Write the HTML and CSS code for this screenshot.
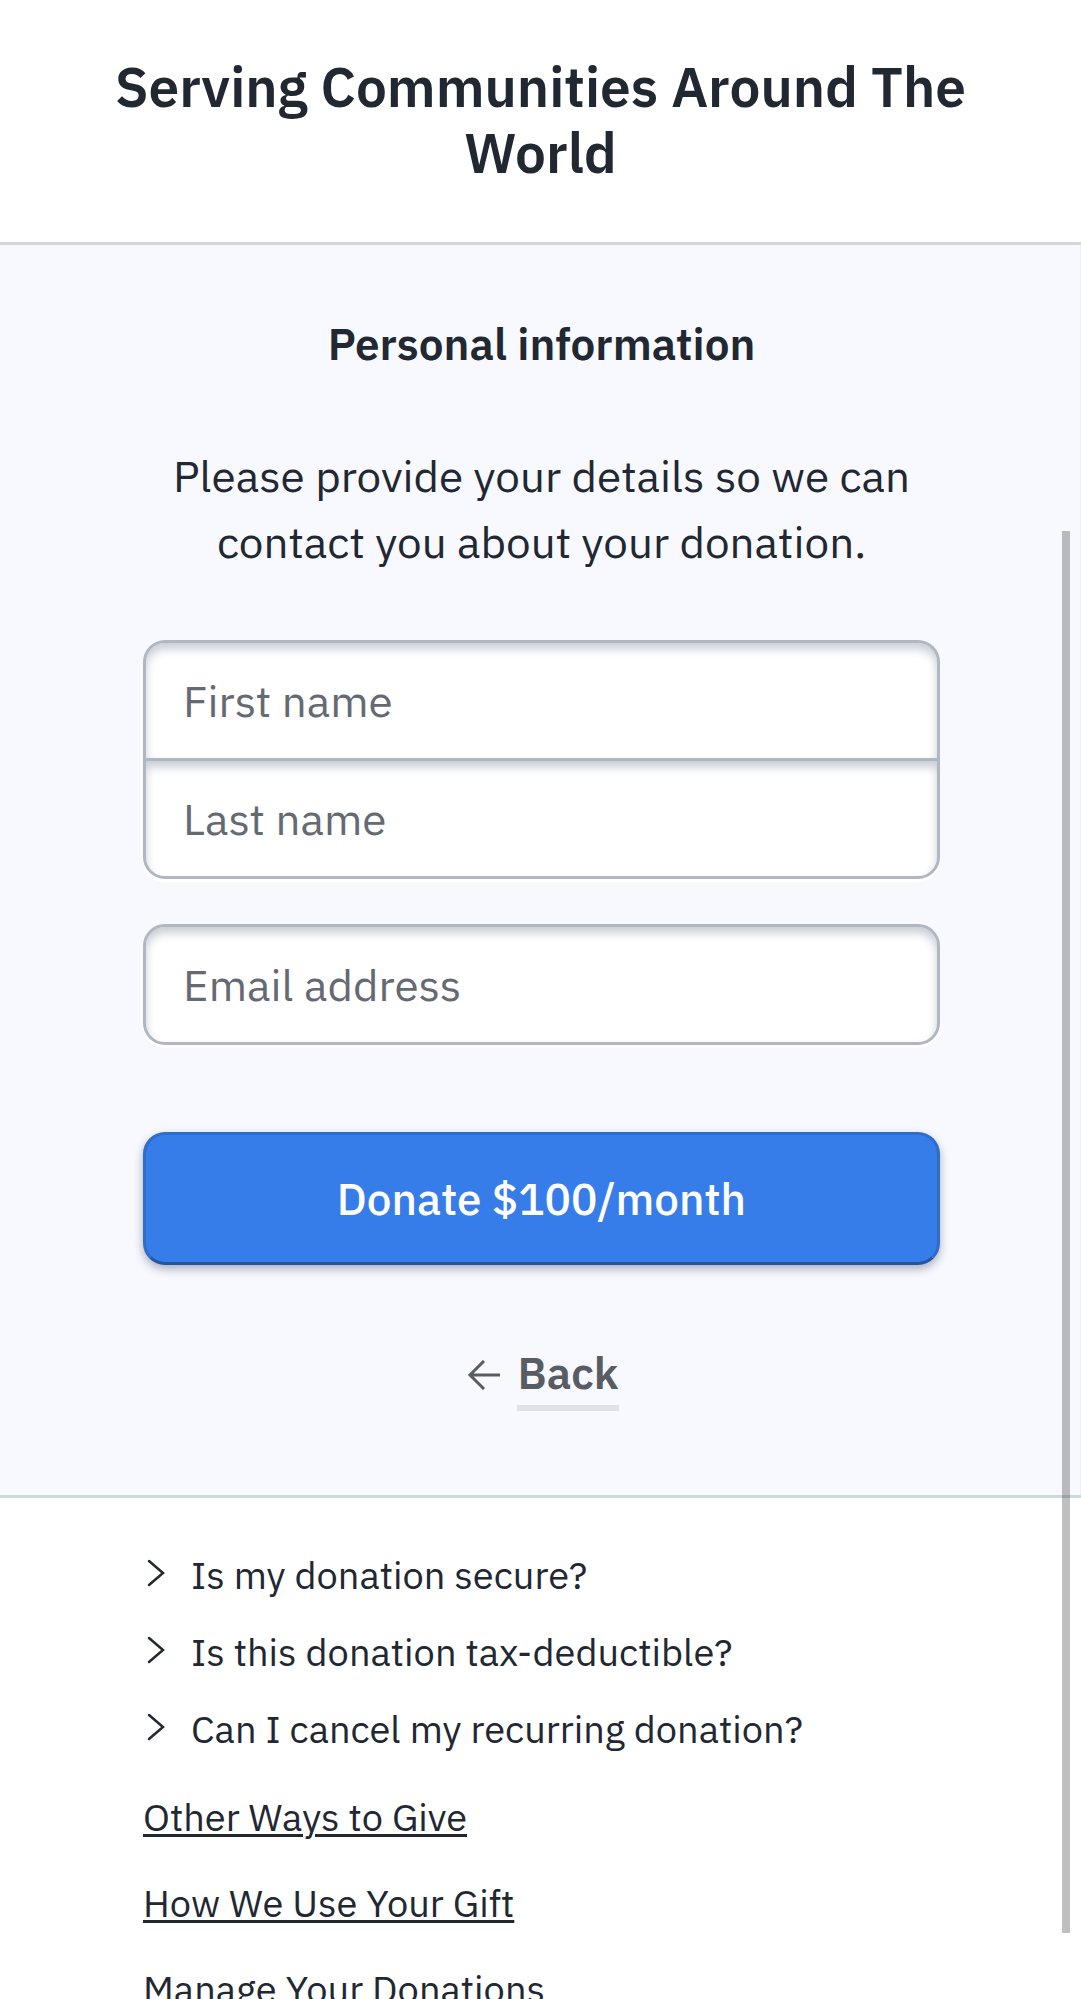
FILE: index.html
```html
<!DOCTYPE html>
<html lang="en">
<head>
<meta charset="utf-8">
<meta name="viewport" content="width=device-width, initial-scale=1">
<title>Serving Communities Around The World</title>
<link rel="stylesheet" href="styles.css">
</head>
<body>
<div class="page">
  <header class="header">
    <h1 class="title">Serving Communities Around The World</h1>
  </header>
  <main class="panel">
    <form class="form">
      <h2 class="heading">Personal information</h2>
      <p class="intro">Please provide your details so we can contact you about your donation.</p>
      <div class="group">
        <input class="field field-top" type="text" placeholder="First name" aria-label="First name">
        <input class="field field-bottom" type="text" placeholder="Last name" aria-label="Last name">
      </div>
      <input class="field" type="email" placeholder="Email address" aria-label="Email address">
      <button class="donate" type="submit">Donate $100/month</button>
      <button class="back" type="button">
        <svg class="arrow" viewBox="-4 0 36 32" aria-hidden="true"><path d="M32 15H2M16 1L2 15L16 29"/></svg>
        <span class="back-label">Back</span>
      </button>
    </form>
  </main>
  <footer class="footer">
    <ul class="faq">
      <li><button class="question" type="button"><svg class="chevron" viewBox="0 0 16 30" aria-hidden="true"><path d="M1 1L15 13L1 25"/></svg>Is my donation secure?</button></li>
      <li><button class="question" type="button"><svg class="chevron" viewBox="0 0 16 30" aria-hidden="true"><path d="M1 1L15 13L1 25"/></svg>Is this donation tax-deductible?</button></li>
      <li><button class="question" type="button"><svg class="chevron" viewBox="0 0 16 30" aria-hidden="true"><path d="M1 1L15 13L1 25"/></svg>Can I cancel my recurring donation?</button></li>
    </ul>
    <nav class="links">
      <a href="#ways">Other Ways to Give</a>
      <a href="#use">How We Use Your Gift</a>
      <a href="#manage">Manage Your Donations</a>
    </nav>
  </footer>
</div>
<div class="scroll-thumb"></div>
</body>
</html>
```
FILE: styles.css
```css
* {
  box-sizing: border-box;
}

body {
  margin: 0;
  color: #212832;
  background: #fff;
  font-family: "IBM Plex Sans", "Noto Sans", sans-serif;
  font-size: 44px;
}

.page {
  height: 100vh;
  overflow-y: auto;
  scrollbar-width: none;
}

button,
input {
  font: inherit;
  color: inherit;
}

.header {
  padding: 54px 100px 56px;
}

.title {
  margin: 0;
  font-size: 55px;
  font-weight: 600;
  line-height: 66px;
  text-align: center;
}

.panel {
  padding: 66px 141px 84px 143px;
  background: #f8f9fe;
  border: solid #d2d6dd;
  border-width: 3px 0;
  box-shadow: inset -1px 0 #eef0f5;
}

.form {
  display: flex;
  flex-direction: column;
}

.heading {
  margin: 0;
  font-size: 44px;
  font-weight: 600;
  line-height: 66px;
  text-align: center;
}

.intro {
  margin: 66px 0 65px;
  line-height: 66px;
  text-align: center;
}

.group {
  display: flex;
  flex-direction: column;
  margin-bottom: 45px;
}

.field {
  width: 100%;
  height: 121px;
  padding: 0 37px;
  border: 3px solid #b0b6c2;
  border-radius: 22px;
  background: #fff;
  box-shadow: inset 0 6px 10px #c9cdd4, 0 3px 0 #fff;
}

.field::placeholder {
  color: #656a72;
  opacity: 1;
}

.field-top {
  height: 118px;
  border-bottom-width: 0;
  border-radius: 22px 22px 0 0;
}

.field-bottom {
  border-radius: 0 0 22px 22px;
}

.donate {
  height: 133px;
  margin-top: 87px;
  padding: 0;
  border: 3px solid #306cca;
  border-bottom-color: #2455a0;
  border-radius: 22px;
  background: #377dea;
  color: #fff;
  font-weight: 500;
  box-shadow: 0 4px 10px #a9adc0;
}

.back {
  display: flex;
  align-self: center;
  align-items: center;
  gap: 17px;
  margin-top: 76px;
  padding: 0;
  border: 0;
  background: none;
  color: #585d63;
  font-weight: 600;
}

.arrow {
  width: 36px;
  height: 32px;
  fill: none;
  stroke: currentColor;
  stroke-width: 3;
}

.back-label {
  line-height: 64px;
  border-bottom: 6px solid #e0e1e6;
}

.footer {
  padding: 38px 141px 60px 143px;
  font-size: 38px;
}

.faq {
  margin: 0;
  padding: 0;
  list-style: none;
}

.question {
  display: flex;
  align-items: center;
  gap: 27px;
  width: 100%;
  height: 77px;
  padding: 0 0 0 5px;
  border: 0;
  background: none;
  text-align: left;
}

.chevron {
  width: 16px;
  height: 30px;
  overflow: visible;
  fill: none;
  stroke: currentColor;
  stroke-width: 2.5;
  stroke-linecap: round;
}

.links {
  display: flex;
  flex-direction: column;
  align-items: flex-start;
  gap: 20px;
  margin-top: 17px;
}

.links a {
  color: inherit;
  line-height: 66px;
  text-decoration-thickness: 3px;
  text-underline-offset: 3px;
}

.scroll-thumb {
  position: fixed;
  top: 531px;
  right: 11px;
  bottom: 66px;
  width: 8px;
  background: rgba(0, 0, 0, 0.25);
}
```
